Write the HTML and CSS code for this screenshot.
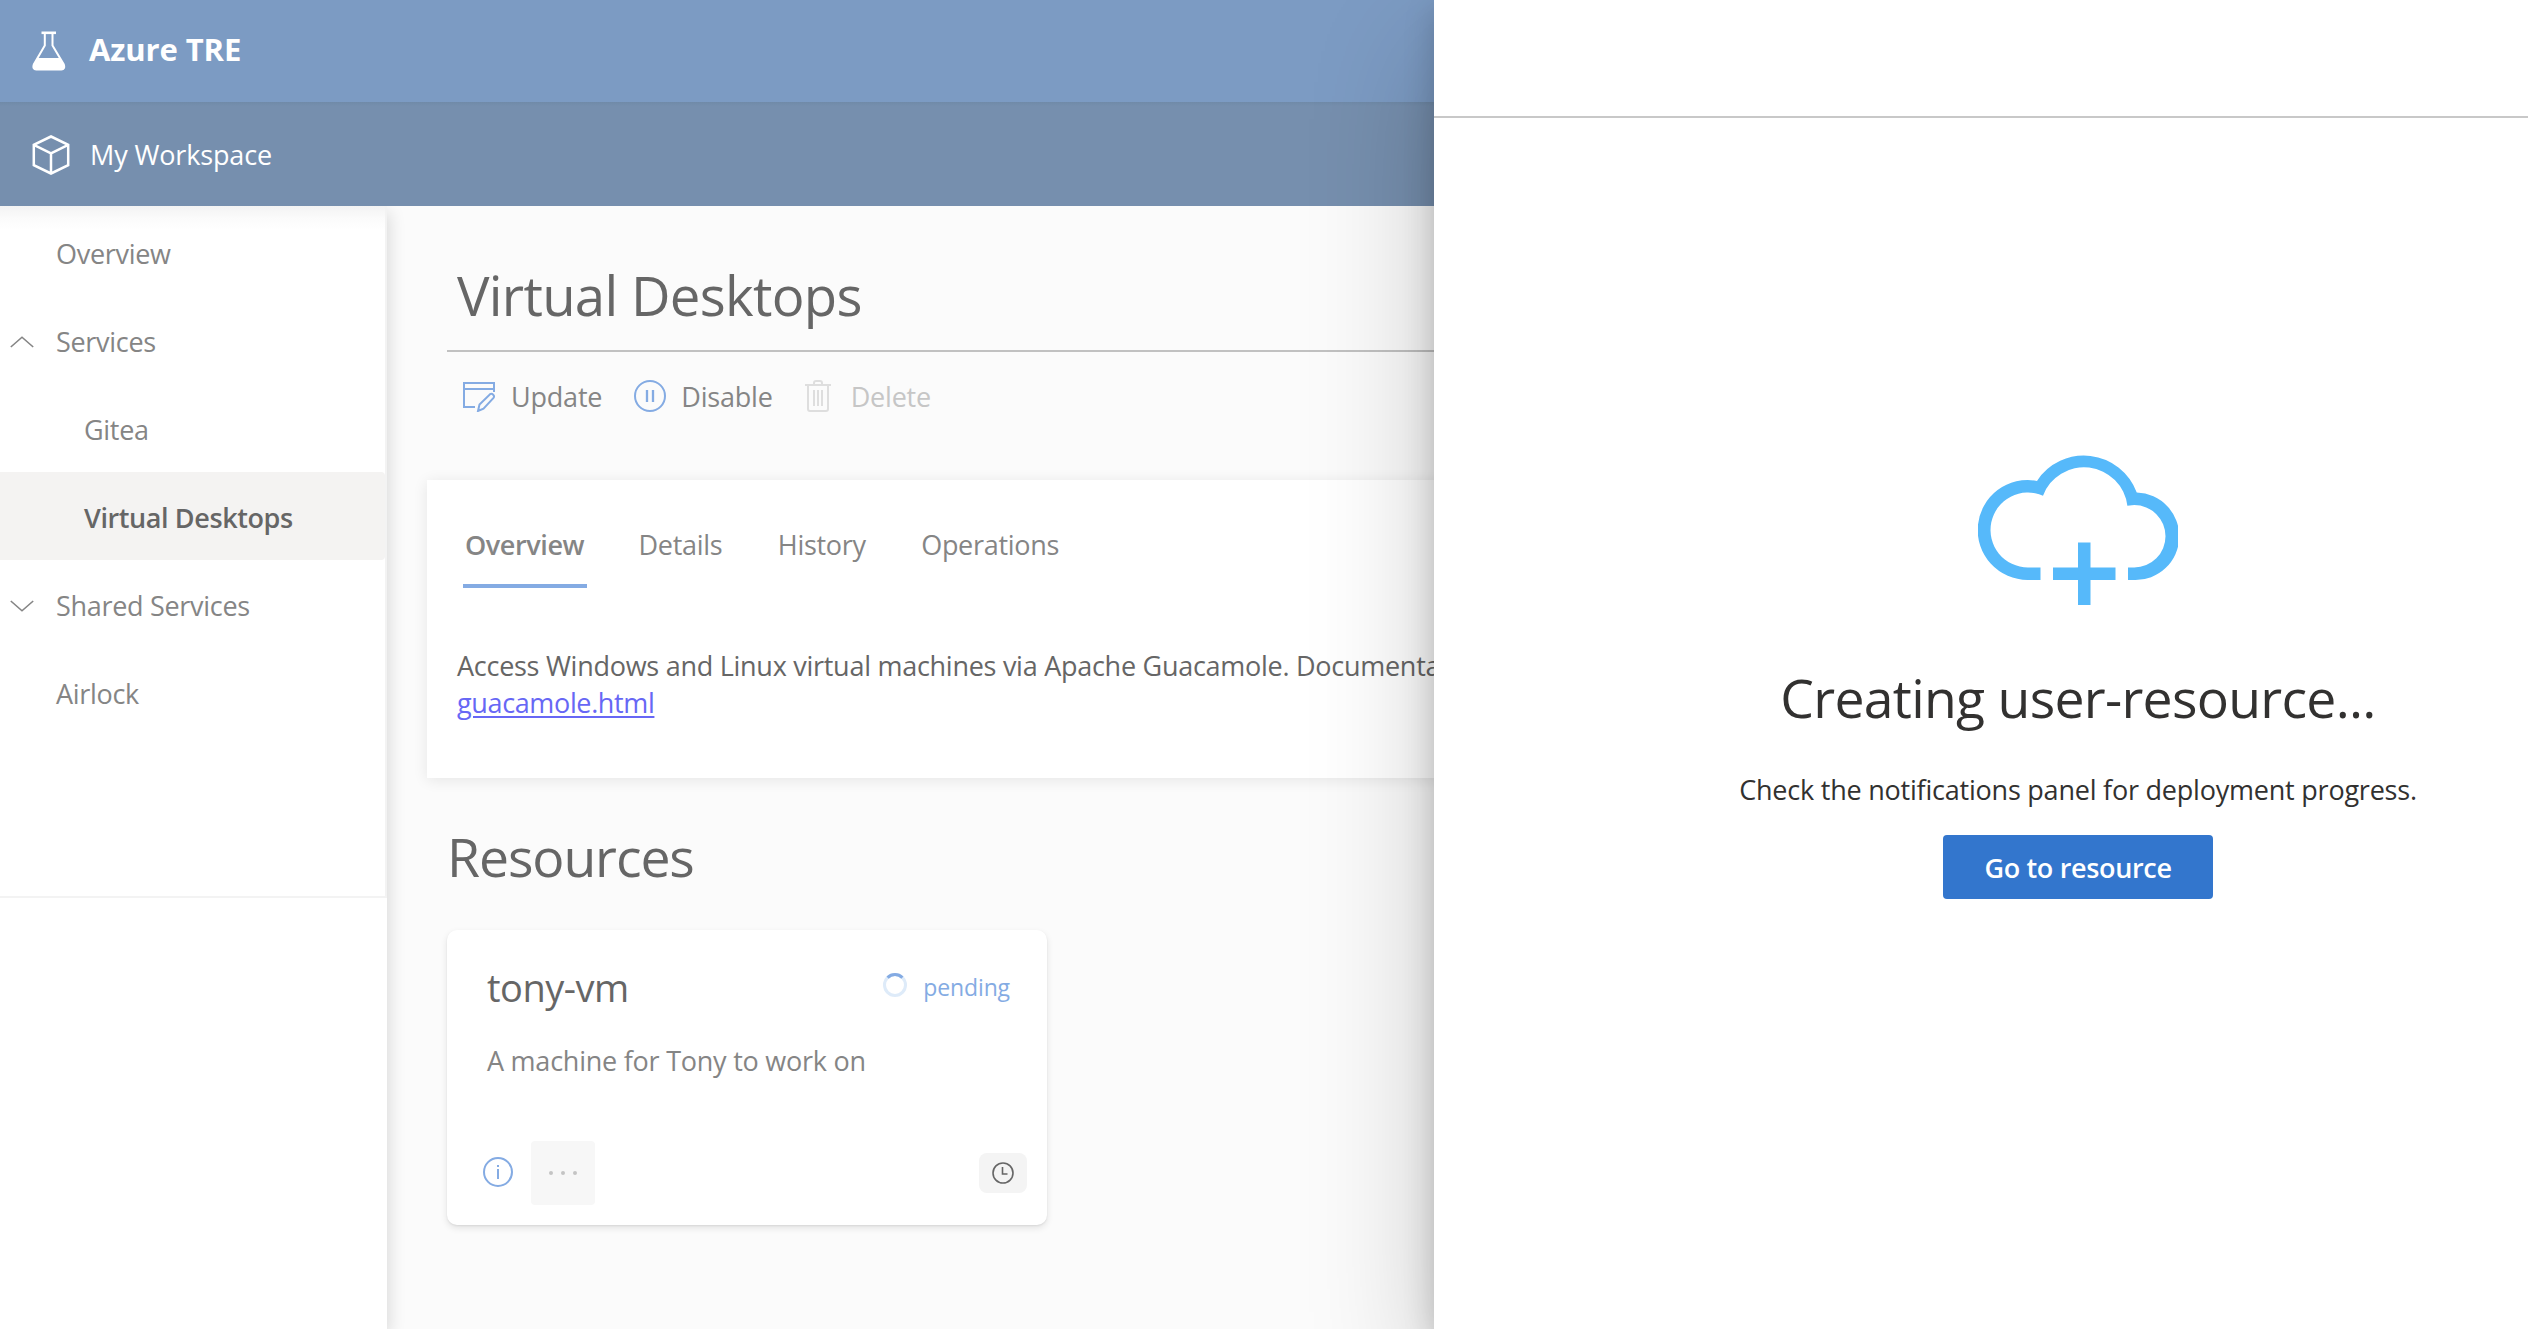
FILE: index.html
```html
<!DOCTYPE html>
<html lang="en">
<head>
<meta charset="utf-8">
<title>Azure TRE</title>
<link rel="stylesheet" href="styles.css">
</head>
<body>
<div class="app">
  <header class="topbar">
    <svg class="topbar-icon" viewBox="0 0 34 40" fill="none" stroke="#fff" stroke-width="2">
      <path d="M9.500 1.800h14.500" stroke-width="2.600"/>
      <path d="M12.800 2v12.500L1.800 33.500q-1.500 4.500 2.500 5h25q4-.5 2.500-5L20.500 14.500V2"/>
      <path d="M5.600 27h22.200l4.500 7q1 4.700-3 5H4.200q-4-.3-3-5z" fill="#fff" stroke="none"/>
    </svg>
    <span class="brand">Azure TRE</span>
  </header>
  <div class="workspace-bar">
    <svg class="workspace-icon" viewBox="0 0 38 42" fill="none" stroke="#fff" stroke-width="2.500">
      <path d="M19 2.500l17.200 8.300v20.400L19 39.500 1.800 31.200V10.800zM1.800 10.800L19 19.400l17.200-8.600M19 19.400v20"/>
    </svg>
    <span class="workspace-name">My Workspace</span>
  </div>
  <div class="body">
    <aside class="sidebar">
      <nav class="nav">
        <a class="nav-item">Overview</a>
        <a class="nav-item">
          <svg class="chevron" viewBox="0 0 24 12"><path d="M.8 11L12 1.200 23.200 11"/></svg>Services</a>
        <a class="nav-item nav-child">Gitea</a>
        <a class="nav-item nav-child nav-active">Virtual Desktops</a>
        <a class="nav-item">
          <svg class="chevron" viewBox="0 0 24 12"><path d="M.8 1L12 10.800 23.200 1"/></svg>Shared Services</a>
        <a class="nav-item">Airlock</a>
      </nav>
    </aside>
    <main class="main">
      <h1 class="title">Virtual Desktops</h1>
      <div class="commands">
        <button class="command">
          <svg class="icon-update" viewBox="0 0 32 32" fill="none" stroke="#84abe3" stroke-width="2">
            <path d="M12 27H1V3h30v9M1 9h30"/>
            <path d="M15 31l1.500-6.500L27 14.200q1.700-1 3.200.5t.3 3.200L20.500 28.700z"/>
          </svg><span class="command-label">Update</span></button>
        <button class="command">
          <svg class="icon-pause" viewBox="0 0 32 32" fill="none" stroke="#84abe3" stroke-width="2">
            <circle cx="16" cy="16" r="15"/>
            <path d="M13 10v12M19 10v12" stroke-width="2.300"/>
          </svg><span class="command-label">Disable</span></button>
        <button class="command command-disabled">
          <svg class="icon-trash" viewBox="0 0 26 32" fill="none" stroke="#dedede" stroke-width="2">
            <path d="M0 5h26M9 5V3q0-2 2-2h4q2 0 2 2v2M3 5v24q0 2 2 2h16q2 0 2-2V5M9 10v16M13 10v16M17 10v16"/>
          </svg><span class="command-label">Delete</span></button>
      </div>
      <section class="details">
        <div class="tabs">
          <span class="tab tab-active">Overview</span>
          <span class="tab">Details</span>
          <span class="tab">History</span>
          <span class="tab">Operations</span>
        </div>
        <p class="description">Access Windows and Linux virtual machines via Apache Guacamole. Documentation:<br><a class="link" href="#">guacamole.html</a></p>
      </section>
      <h2 class="subtitle">Resources</h2>
      <article class="card">
        <div class="card-head">
          <h3 class="card-title">tony-vm</h3>
          <div class="status">
            <svg class="spinner" viewBox="0 0 24 24" fill="none" stroke-width="3">
              <circle cx="12" cy="12" r="10.500" stroke="#deebf9"/>
              <path d="M4.600 4.600A10.500 10.500 0 0 1 19.400 4.600" stroke="#84abe3"/>
            </svg>
            <span>pending</span>
          </div>
        </div>
        <p class="card-text">A machine for Tony to work on</p>
        <div class="card-foot">
          <svg class="icon-info" viewBox="0 0 30 30" fill="none" stroke="#84abe3" stroke-width="2">
            <circle cx="15" cy="15" r="14"/><path d="M15 12v10M15 8v2"/>
          </svg>
          <button class="more">
            <svg class="dots" viewBox="0 0 28 4" fill="#c4c4c4"><circle cx="2" cy="2" r="2"/><circle cx="14" cy="2" r="2"/><circle cx="26" cy="2" r="2"/></svg>
          </button>
          <span class="clock">
            <svg class="icon-clock" viewBox="0 0 22 22" fill="none" stroke="#666" stroke-width="1.600">
              <circle cx="11" cy="11" r="10"/><path d="M10.500 5v7H15.500"/>
            </svg>
          </span>
        </div>
      </article>
    </main>
  </div>
</div>
<section class="panel">
  <div class="panel-head"></div>
  <div class="panel-body">
    <svg class="cloud" viewBox="0 0 16 12" fill="#56b9fa">
      <path d="M5 10H4A4 4 0 1 1 4.720 2.070 4.500 4.500 0 0 1 12.700 3 3.500 3.500 0 0 1 12.500 10H12V9h.5a2.500 2.500 0 0 0 0-5l-.55.06A3.500 3.500 0 0 0 5.200 3.250 3 3 0 1 0 4 9h1z"/>
      <path d="M8 7h1v2h2v1H9v2H8v-2H6V9h2z"/>
    </svg>
    <h2 class="panel-title">Creating user-resource...</h2>
    <p class="panel-text">Check the notifications panel for deployment progress.</p>
    <button class="primary">Go to resource</button>
  </div>
</section>
</body>
</html>
```
FILE: styles.css
```css
* { box-sizing: border-box; }

body {
  margin: 0;
  position: relative;
  width: 2528px;
  height: 1329px;
  overflow: hidden;
  background: #fff;
  color: #323130;
  font: 27px/40px "Open Sans", "Noto Sans", sans-serif;
  letter-spacing: -0.3px;
}

h1, h2, h3, p { margin: 0; font-weight: 400; }
svg { flex: none; display: block; }
button { border: 0; padding: 0; background: none; font: inherit; letter-spacing: inherit; color: inherit; }

.app { display: flex; flex-direction: column; height: 1329px; }

.topbar {
  display: flex;
  align-items: center;
  height: 102px;
  padding-left: 32px;
  background: #7c9bc3;
  color: #fff;
}
.topbar-icon { width: 34px; height: 40px; }
.brand { margin-left: 23px; padding-bottom: 4px; font-size: 31px; font-weight: 700; letter-spacing: -0.1px; }

.workspace-bar {
  display: flex;
  align-items: center;
  height: 104px;
  padding-left: 32px;
  background: linear-gradient(#708aa8, #768fae 4px);
  color: #fff;
}
.workspace-icon { width: 38px; height: 42px; margin-top: 2px; }
.workspace-name { margin-left: 20px; padding-top: 2px; letter-spacing: -0.14px; }

.body { display: flex; flex: 1; min-height: 0; }

.sidebar {
  width: 387px;
  background: #fff;
  box-shadow: 2px 6px 16px rgba(0, 0, 0, 0.14);
  clip-path: inset(0 -30px 0 0);
  z-index: 1;
}
.nav {
  height: 692px;
  padding-top: 2px;
  border-right: 2px solid #f3f3f3;
  border-bottom: 2px solid #f3f3f3;
  background: linear-gradient(#f3f3f3, #fbfbfb 12px, #fff 24px);
}
.nav-item {
  display: flex;
  align-items: center;
  height: 88px;
  padding: 3px 0 0 56px;
  border-radius: 0 4px 4px 0;
  color: #858585;
}
.chevron { width: 24px; height: 12px; margin: 0 22px 0 -46px; fill: none; stroke: #858585; stroke-width: 1.6; }
.nav-child { padding-left: 84px; }
.nav-active { background: #f4f3f2; color: #666; font-weight: 600; letter-spacing: -0.4px; }

.main {
  display: flex;
  flex-direction: column;
  flex: 1;
  padding: 51px 40px 0;
  background: #fbfbfb;
}
.title {
  height: 95px;
  margin-left: 20px;
  padding-left: 10px;
  border-bottom: 2px solid #c1c1c1;
  color: #666;
  font-size: 54.5px;
  line-height: 76px;
  letter-spacing: -0.7px;
}

.commands { display: flex; align-items: center; height: 88px; padding-left: 36px; }
.command { display: flex; align-items: center; color: #858585; letter-spacing: -0.2px; }
.command + .command { margin-left: 32px; }
.command-label { padding-top: 2px; }
.command-disabled { color: #c6c6c6; }
.icon-update { width: 32px; height: 32px; margin-right: 16px; }
.icon-pause { width: 32px; height: 32px; margin-right: 15px; }
.icon-trash { width: 26px; height: 32px; margin: 0 20px 0 0; }

.details {
  height: 298px;
  margin-top: 40px;
  padding: 20px 0 0 30px;
  background: #fff;
  box-shadow: 0 2px 14px rgba(0, 0, 0, 0.09);
}
.tabs { display: flex; margin-left: 6px; gap: 19.5px; }
.tab { height: 88px; padding: 1px 18px 0; color: #858585; line-height: 88px; }
.tab-active { width: 124px; margin-right: 14px; padding: 1px 0 0 2px; border-bottom: 4px solid #84abe3; font-weight: 600; letter-spacing: -0.4px; }
.description { margin-top: 59px; color: #666; line-height: 37px; letter-spacing: -0.27px; white-space: nowrap; }
.link { color: #6767f5; letter-spacing: -0.36px; text-decoration-thickness: 2px; text-underline-offset: 3px; }

.subtitle {
  margin: 41px 0 0 20px;
  color: #666;
  font-size: 53.5px;
  line-height: 76px;
  letter-spacing: -1.09px;
}

.card {
  display: flex;
  flex-direction: column;
  width: 600px;
  height: 295px;
  margin: 35px 0 0 20px;
  padding: 31px 20px 20px 36px;
  border-radius: 10px;
  background: #fff;
  box-shadow: 0 3px 7px rgba(0, 0, 0, 0.1), 0 1px 2px rgba(0, 0, 0, 0.07);
}
.card-head { display: flex; justify-content: space-between; height: 52px; padding: 0 17px 0 4px; }
.card-title { color: #666; font-size: 38px; line-height: 52px; letter-spacing: -0.49px; }
.status { display: flex; gap: 16px; color: #84abe3; font-size: 23px; line-height: 52px; letter-spacing: -0.12px; }
.spinner { width: 24px; height: 24px; margin-top: 12px; }
.card-text { margin: 28px 0 0 4px; color: #858585; letter-spacing: -0.24px; }
.card-foot { display: flex; align-items: center; height: 64px; margin-top: 60px; }
.icon-info { width: 30px; height: 30px; margin-bottom: 2px; }
.more { display: flex; align-items: center; justify-content: center; width: 64px; height: 64px; margin-left: 18px; border-radius: 4px; background: #f7f7f7; }
.dots { width: 28px; height: 4px; }
.clock { display: flex; align-items: center; justify-content: center; width: 48px; height: 40px; margin-left: auto; border-radius: 8px; background: #f4f4f4; }
.icon-clock { width: 22px; height: 22px; }

/* Slide-over panel covering the right side of the page */
.panel {
  position: absolute;
  z-index: 2;
  top: 0;
  right: 0;
  display: flex;
  flex-direction: column;
  width: 1094px;
  height: 1329px;
  background: #fff;
  box-shadow: 0 51px 115px rgba(0, 0, 0, 0.22), 0 10px 29px rgba(0, 0, 0, 0.18);
}
.panel-head { height: 118px; border-bottom: 2px solid #c8c8c8; }
.panel-body { display: flex; flex-direction: column; align-items: center; padding: 337px 0 0 194px; }
.cloud { width: 200px; height: 150px; }
.panel-title { margin-top: 55px; font-size: 53.5px; line-height: 76px; letter-spacing: -0.71px; }
.panel-text { margin-top: 34px; letter-spacing: -0.22px; }
.primary { width: 270px; height: 64px; margin-top: 25px; padding-top: 1px; border-radius: 4px; background: #3376cd; color: #fff; font-weight: 600; letter-spacing: -0.33px; }
```
